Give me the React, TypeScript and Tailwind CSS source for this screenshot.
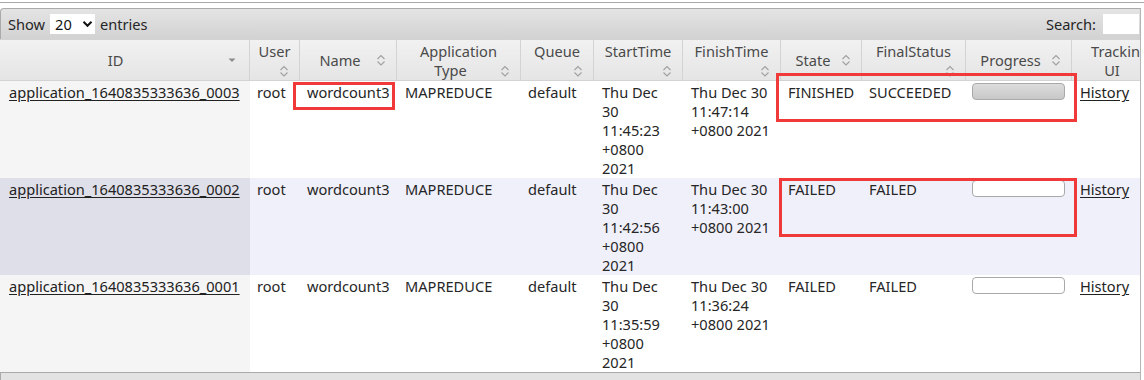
import React from "react";

type Col = {
  w: number;
  lines: string[];
  icon: "none" | "inline" | "below" | "last" | "tri";
};

const cols: Col[] = [
  { w: 250, lines: ["ID"], icon: "tri" },
  { w: 50, lines: ["User"], icon: "below" },
  { w: 97, lines: ["Name"], icon: "inline" },
  { w: 124, lines: ["Application", "Type"], icon: "last" },
  { w: 73, lines: ["Queue"], icon: "below" },
  { w: 89, lines: ["StartTime"], icon: "below" },
  { w: 98, lines: ["FinishTime"], icon: "below" },
  { w: 81, lines: ["State"], icon: "inline" },
  { w: 104, lines: ["FinalStatus"], icon: "below" },
  { w: 106, lines: ["Progress"], icon: "inline" },
  { w: 96, lines: ["Tracking", "UI"], icon: "last" },
];

const rows = [
  {
    id: "application_1640835333636_0003",
    start: ["Thu Dec", "30", "11:45:23", "+0800", "2021"],
    finish: ["Thu Dec 30", "11:47:14", "+0800 2021"],
    state: "FINISHED",
    final: "SUCCEEDED",
    done: true,
    alt: false,
  },
  {
    id: "application_1640835333636_0002",
    start: ["Thu Dec", "30", "11:42:56", "+0800", "2021"],
    finish: ["Thu Dec 30", "11:43:00", "+0800 2021"],
    state: "FAILED",
    final: "FAILED",
    done: false,
    alt: true,
  },
  {
    id: "application_1640835333636_0001",
    start: ["Thu Dec", "30", "11:35:59", "+0800", "2021"],
    finish: ["Thu Dec 30", "11:36:24", "+0800 2021"],
    state: "FAILED",
    final: "FAILED",
    done: false,
    alt: false,
  },
];

function SortIcon() {
  return (
    <span className="w-4 h-4 shrink-0 flex items-center justify-center">
      <svg width="16" height="16" viewBox="0 0 16 16">
        <path d="M4.5 7 L8 3.5 L11.5 7" fill="none" stroke="#a0a0a0" strokeWidth="1.1" />
        <path d="M4.5 9.5 L8 13 L11.5 9.5" fill="none" stroke="#a0a0a0" strokeWidth="1.1" />
      </svg>
    </span>
  );
}

function TriIcon() {
  return (
    <span className="w-4 h-4 shrink-0 flex items-center justify-center">
      <svg width="16" height="16" viewBox="0 0 16 16">
        <path d="M4.5 6.5 L11.5 6.5 L8 10 Z" fill="#8c8c8c" />
      </svg>
    </span>
  );
}

function HeaderCell({ c, last }: { c: Col; last: boolean }) {
  const single = c.icon === "inline" || c.icon === "tri";
  return (
    <div
      className={`shrink-0 flex flex-col ${single ? "justify-center" : "pt-[2px]"} pl-[7px] ${
        c.icon === "tri" ? "pr-[9px]" : "pr-[7px]"
      } ${last ? "" : "border-r border-[#d3d3d3]"}`}
      style={{ width: c.w }}
    >
      {single && (
        <div className="flex items-center h-[19px]">
          <span className="flex-1 text-center whitespace-nowrap">{c.lines[0]}</span>
          {c.icon === "tri" ? <TriIcon /> : <SortIcon />}
        </div>
      )}
      {c.icon === "below" && (
        <>
          <div className="h-[19px] text-center whitespace-nowrap">{c.lines[0]}</div>
          <div className="h-[19px] flex items-center justify-end">
            <SortIcon />
          </div>
        </>
      )}
      {c.icon === "last" && (
        <>
          <div className="h-[19px] text-center whitespace-nowrap">{c.lines[0]}</div>
          <div className="h-[19px] flex items-center">
            <span className="flex-1 text-center whitespace-nowrap">{c.lines[1]}</span>
            <SortIcon />
          </div>
        </>
      )}
    </div>
  );
}

function Lines({ lines }: { lines: string[] }) {
  return (
    <>
      {lines.map((l, i) => (
        <div key={i} className="whitespace-nowrap">
          {l}
        </div>
      ))}
    </>
  );
}

export default function App() {
  return (
    <div
      className="relative w-[1144px] h-[380px] overflow-hidden bg-white text-[14.6px] leading-[19px] text-[#262626]"
      style={{ fontFamily: "'Noto Sans', 'Open Sans', sans-serif" }}
    >
      <div className="h-[2px]" />
      <div className="h-px bg-[#a8a8a8]" />
      <div className="h-[5px]" />

      <div className="w-[1141px] overflow-hidden border-r border-[#b5b5b5]">
        {/* top toolbar */}
        <div className="h-[31px] flex items-center border-t border-l border-[#aaa] rounded-tl-[4px] bg-linear-to-b from-[#e4e4e4] to-[#d2d2d2] pl-[7px] pr-[1px]">
          <span>Show</span>
          <span className="ml-[5px] w-[45px] h-[20px] bg-white flex items-center pl-[5px] text-[#111]">
            <span>20</span>
            <svg className="ml-[10px]" width="11" height="8" viewBox="0 0 11 8">
              <path d="M1.5 1.8 L5.5 5.8 L9.5 1.8" fill="none" stroke="#111" strokeWidth="2" />
            </svg>
          </span>
          <span className="ml-[5px]">entries</span>
          <span className="ml-auto">Search:</span>
          <span className="ml-[7px] w-[36px] h-[20px] bg-white" />
        </div>

        {/* header */}
        <div className="flex h-[42px] border-t border-b border-[#d3d3d3] bg-linear-to-b from-[#f1f1f1] via-[#ebebeb] to-[#e5e5e5] text-[#4a4a4a] w-[1168px]">
          {cols.map((c, i) => (
            <HeaderCell key={i} c={c} last={i === cols.length - 1} />
          ))}
        </div>

        {/* rows */}
        {rows.map((r, i) => (
          <div
            key={i}
            className={`flex h-[97px] w-[1168px] ${r.alt ? "bg-[#f0f0fa]" : "bg-white"}`}
          >
            <div
              className={`shrink-0 w-[250px] pl-[9px] pt-[2px] ${
                r.alt ? "bg-[#dfdfe9]" : "bg-[#f5f5f5]"
              }`}
            >
              <a className="underline underline-offset-[2px] text-[#222]">{r.id}</a>
            </div>
            <div className="shrink-0 w-[50px] pl-[7px] pt-[2px]">root</div>
            <div className="shrink-0 w-[97px] pl-[7px] pt-[2px]">wordcount3</div>
            <div className="shrink-0 w-[124px] pl-[8px] pt-[2px]">MAPREDUCE</div>
            <div className="shrink-0 w-[73px] pl-[7px] pt-[2px]">default</div>
            <div className="shrink-0 w-[89px] pl-[8px] pt-[2px]">
              <Lines lines={r.start} />
            </div>
            <div className="shrink-0 w-[98px] pl-[8px] pt-[2px]">
              <Lines lines={r.finish} />
            </div>
            <div className="shrink-0 w-[81px] pl-[7px] pt-[2px]">{r.state}</div>
            <div className="shrink-0 w-[104px] pl-[7px] pt-[2px]">{r.final}</div>
            <div className="shrink-0 w-[106px] pl-[6px] pt-[2px]">
              <div
                className={`w-[93px] h-[17px] rounded-[4px] border border-[#a9a9a9] ${
                  r.done ? "bg-linear-to-b from-[#dcdcdc] to-[#c8c8c8]" : "bg-white"
                }`}
              />
            </div>
            <div className="shrink-0 w-[96px] pl-[8px] pt-[2px]">
              <a className="underline underline-offset-[2px] text-[#222]">History</a>
            </div>
          </div>
        ))}

        {/* bottom toolbar */}
        <div className="h-[20px] border-t border-l border-[#aaa] bg-[#e3e3e3]" />
      </div>

      {/* annotation boxes */}
      <div className="absolute left-[293px] top-[82px] w-[102px] h-[28px] border-[3px] border-[#f03a3a]" />
      <div className="absolute left-[776px] top-[73px] w-[301px] h-[49px] border-[3px] border-[#f03a3a]" />
      <div className="absolute left-[779px] top-[178px] w-[298px] h-[59px] border-[3px] border-[#f03a3a]" />
    </div>
  );
}
